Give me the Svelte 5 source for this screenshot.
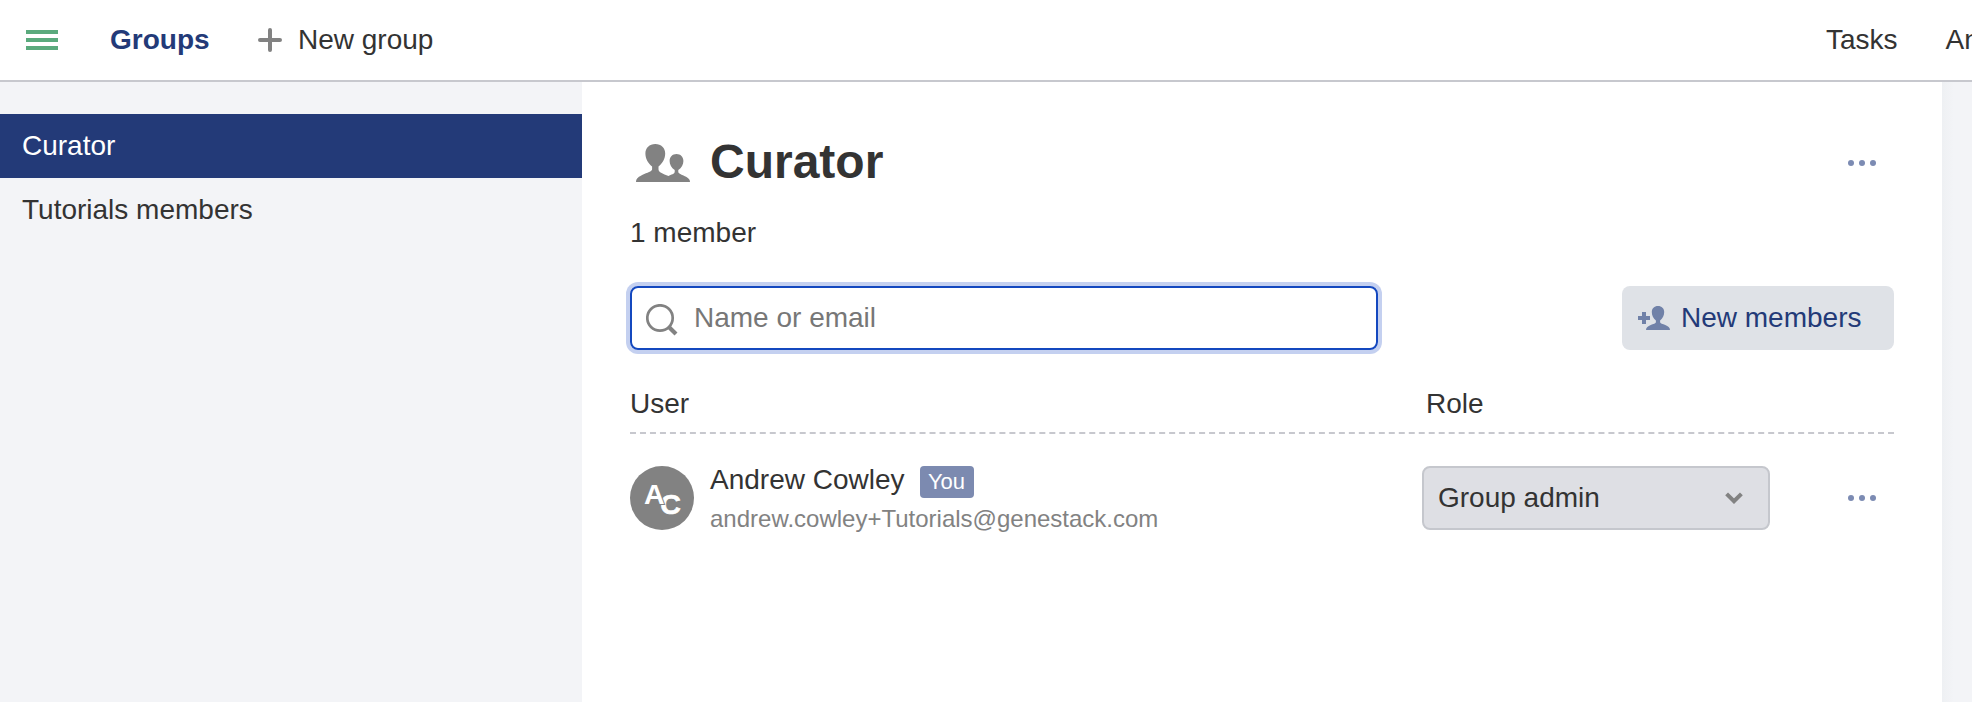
<script>
  const groups = ['Curator', 'Tutorials members'];
  const members = [
    { name: 'Andrew Cowley', you: true, email: 'andrew.cowley+Tutorials@genestack.com', role: 'Group admin' }
  ];
  let selected = $state('Curator');
</script>

{#snippet dots()}
  <button class="more" aria-label="More actions">
    <svg width="28" height="6" viewBox="0 0 28 6" fill="#7c8bb3">
      <circle cx="3" cy="3" r="3" /><circle cx="14" cy="3" r="3" /><circle cx="25" cy="3" r="3" />
    </svg>
  </button>
{/snippet}

<div class="app">
  <header>
    <svg class="burger" width="32" height="20" viewBox="0 0 32 20" fill="#5aaa7d">
      <path d="M0 0h28v4H0zM0 8h28v4H0zM0 16h28v4H0z" transform="scale(1.143 1)" />
    </svg>
    <span class="brand">Groups</span>
    <button class="new-group">
      <svg width="24" height="24" viewBox="0 0 24 24" stroke="#828282" stroke-width="4" stroke-linecap="round">
        <path d="M12 2v20M2 12h20" />
      </svg>
      <span>New group</span>
    </button>
    <nav>
      <span>Tasks</span>
      <span>Andrew</span>
    </nav>
  </header>

  <div class="body">
    <aside>
      {#each groups as group}
        <button class="item" class:active={group === selected} onclick={() => (selected = group)}>{group}</button>
      {/each}
    </aside>

    <main>
      <div class="title">
        <svg width="54" height="38" viewBox="0 0 54 38" fill="#828282">
          <path d="M19.3 0C25.200 0 29.200 4 29.200 9.600c0 5-2.600 10-6.700 12.800v3c0 2 2.500 3.500 6 5l4 1.700c2.600-1.300 6.200-2.300 6.200-4v-2.200c-3.300-1.800-5.100-5.400-5.100-8.800C33.600 12.800 36.500 10 40.500 10s6.900 2.800 6.900 7.100c0 3.400-1.800 7-5.100 8.800v2.200c0 1.500 2.600 2.300 5.200 3.500C51.200 33.300 54 34.800 54 38H0c0-3.700 3-5.500 6.600-7.300 4.500-2.100 9.500-3.300 9.500-5.500v-2.800C12 19.600 9.400 14.600 9.400 9.600 9.400 4 13.400 0 19.300 0z" />
        </svg>
        <h1>Curator</h1>
        {@render dots()}
      </div>
      <p class="count">1 member</p>

      <div class="tools">
        <label class="search">
          <svg width="32" height="32" viewBox="0 0 32 32" fill="none" stroke="#828282">
            <circle cx="14" cy="14" r="12.700" stroke-width="2.700" />
            <path d="M22.600 22.800L30 30" stroke-width="4.200" />
          </svg>
          <input placeholder="Name or email" />
        </label>
        <button class="add">
          <svg width="32" height="24" viewBox="0 0 32 24" fill="#7081a8">
            <path d="M4 6h4v4h4v4H8v4H4v-4H0v-4h4z" />
            <path d="M20 0c3.700 0 6.200 2.400 6.200 6 0 3.400-1.500 6.700-4.100 8.400v1.800c0 1.200 2.700 1.800 5.200 2.800 2.700 1.100 4.700 2.600 4.700 5H8c0-2.400 2-3.900 4.700-5 2.500-1 5.200-1.600 5.200-2.800v-1.800c-2.600-1.700-4.100-5-4.100-8.400 0-3.600 2.500-6 6.200-6z" />
          </svg>
          <span>New members</span>
        </button>
      </div>

      <div class="columns">
        <span>User</span>
        <span>Role</span>
      </div>

      {#each members as m}
        <div class="row">
          <svg class="avatar" width="64" height="64" viewBox="0 0 64 64">
            <circle cx="32" cy="32" r="32" fill="#828282" />
            <text x="30.200" y="47.900" class="back">C</text>
            <text x="14" y="38" class="outline">A</text>
          </svg>
          <div class="who">
            <div class="name">
              <span>{m.name}</span>
              {#if m.you}<span class="you">You</span>{/if}
            </div>
            <div class="email">{m.email}</div>
          </div>
          <button class="role">
            <span>{m.role}</span>
            <svg width="18" height="12" viewBox="0 0 18 12" fill="none" stroke="#828282" stroke-width="4">
              <path d="M1.600 1.800L9 9.200L16.400 1.800" />
            </svg>
          </button>
          {@render dots()}
        </div>
      {/each}
    </main>
    <div class="edge"></div>
  </div>
</div>

<style>
  :global(body) {
    overflow: hidden;
  }
  .app {
    width: 1972px;
    height: 702px;
    display: flex;
    flex-direction: column;
    overflow: hidden;
    background: #fff;
    color: #333;
    font: 28px 'Liberation Sans', Helvetica, Arial, sans-serif;
  }
  button {
    border: 0;
    padding: 0;
    margin: 0;
    background: none;
    font: inherit;
    color: inherit;
    text-align: left;
  }
  svg {
    display: block;
    flex: none;
  }
  header {
    box-sizing: border-box;
    flex: none;
    height: 82px;
    border-bottom: 2px solid #c7c8ce;
    display: flex;
    align-items: center;
    padding-left: 26px;
    white-space: nowrap;
  }
  .brand {
    width: 148px;
    margin-left: 52px;
    color: #233a78;
    font-weight: bold;
  }
  .new-group {
    display: flex;
    align-items: center;
    gap: 16px;
  }
  nav {
    width: 146px;
    margin-left: auto;
    display: flex;
    gap: 48px;
    overflow: hidden;
  }
  .body {
    flex: 1;
    display: flex;
  }
  aside {
    width: 582px;
    padding-top: 32px;
    background: #f3f4f7;
    display: flex;
    flex-direction: column;
  }
  .item {
    height: 64px;
    padding-left: 22px;
  }
  .item.active {
    background: #233a78;
    color: #fff;
  }
  main {
    box-sizing: border-box;
    width: 1360px;
    padding: 48px 48px 0;
  }
  .edge {
    flex: 1;
    background: linear-gradient(90deg, #eef0f3, #f3f4f7 12px);
  }
  .title {
    display: flex;
    align-items: center;
    height: 66px;
    padding-left: 6px;
  }
  h1 {
    flex: 1;
    margin: 0 0 3px 20px;
    font-size: 48px;
    line-height: 64px;
  }
  .more {
    margin-right: 18px;
  }
  .count {
    margin: 20px 0 37px;
    line-height: 33px;
  }
  .tools {
    display: flex;
    justify-content: space-between;
  }
  .search {
    box-sizing: border-box;
    width: 748px;
    height: 64px;
    display: flex;
    align-items: center;
    gap: 16px;
    padding-left: 14px;
    border: 2px solid #1448bf;
    border-radius: 8px;
    box-shadow: 0 0 0 4px #c4d0f0;
  }
  .search svg {
    margin-top: 4px;
  }
  input {
    flex: 1;
    border: 0;
    outline: 0;
    padding: 0;
    background: none;
    font: inherit;
  }
  input::placeholder {
    color: #777;
  }
  .add {
    box-sizing: border-box;
    width: 272px;
    height: 64px;
    display: flex;
    align-items: center;
    gap: 11px;
    padding-left: 16px;
    border-radius: 8px;
    background: #dfe2e7;
    color: #233a78;
    white-space: nowrap;
  }
  .columns {
    display: grid;
    grid-template-columns: 796px 1fr;
    padding-top: 36px;
    height: 46px;
    line-height: 36px;
    border-bottom: 2px dashed #c7c8ce;
  }
  .row {
    display: flex;
    align-items: center;
    height: 64px;
    margin-top: 32px;
  }
  .avatar text {
    font-size: 28.5px;
    font-weight: bold;
    fill: #fff;
  }
  .avatar .back {
    stroke: #fff;
    stroke-width: 0.7px;
  }
  .avatar .outline {
    stroke: #828282;
    stroke-width: 2px;
    paint-order: stroke;
  }
  .who {
    width: 712px;
    margin-left: 16px;
  }
  .name {
    display: flex;
    align-items: center;
    gap: 15px;
    height: 32px;
    line-height: 28px;
  }
  .name span:first-child {
    padding-bottom: 4px;
  }
  .you {
    width: 54px;
    height: 32px;
    border-radius: 4px;
    background: #7c8ab0;
    color: #fff;
    font-size: 22px;
    line-height: 32px;
    text-align: center;
  }
  .email {
    padding-top: 7px;
    height: 25px;
    font-size: 24px;
    line-height: 28px;
    color: #828282;
  }
  .role {
    box-sizing: border-box;
    width: 348px;
    height: 64px;
    display: flex;
    align-items: center;
    justify-content: space-between;
    padding: 0 25px 0 14px;
    border: 2px solid #c5c7cd;
    border-radius: 8px;
    background: #dedfe4;
  }
  .row .more {
    margin-left: auto;
  }
</style>
